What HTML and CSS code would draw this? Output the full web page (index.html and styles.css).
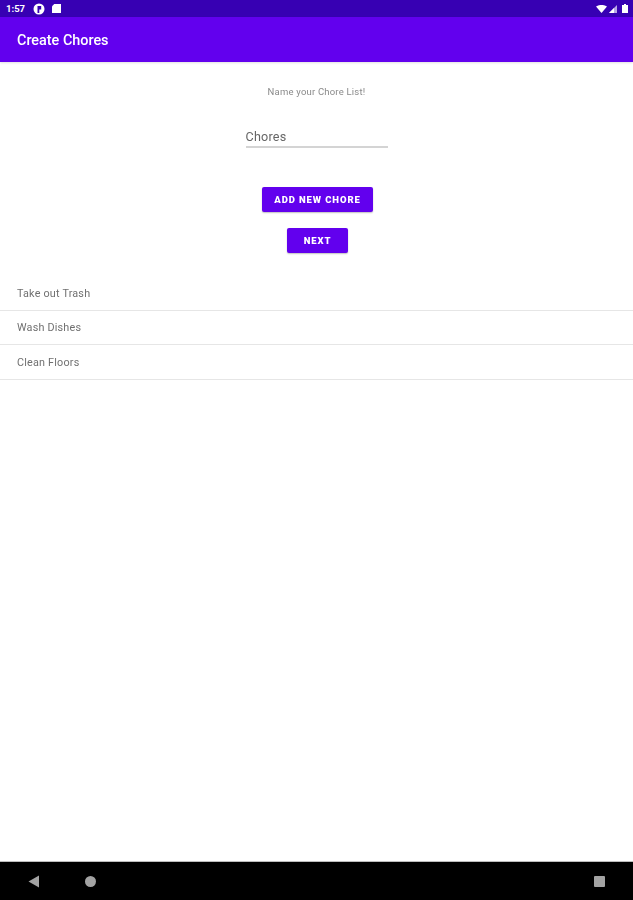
FILE: index.html
```html
<!DOCTYPE html>
<html lang="en">
<head>
<meta charset="utf-8">
<title>Create Chores</title>
<link rel="stylesheet" href="styles.css">
</head>
<body>
<div class="screen">
  <div class="status">
    <div class="status-left">
      <span class="time">1:57</span>
      <svg class="ic-f" width="12" height="12" viewBox="0 0 12 12"><circle cx="6" cy="6" r="5.500" fill="#fff"/><path d="M4.500 10V3h3.700v3.500H6.300V10z" fill="#3700b3"/></svg>
      <svg class="ic-s" width="9" height="9" viewBox="0 0 9 9"><path d="M2.200 0H9v9H0V2.200z" fill="#fff"/></svg>
    </div>
    <div class="status-right">
      <svg class="ic-wifi" width="11" height="8" viewBox="0 0 11 8"><path d="M0 1.600Q5.500-1.800 11 1.600L5.500 8z" fill="#fff"/></svg>
      <svg class="ic-signal" width="8" height="8" viewBox="0 0 8 8"><path d="M8 0V8H0z" fill="#b9a6e6"/><path d="M5 3V8H0z" fill="#fff"/></svg>
      <svg class="ic-batt" width="6" height="9" viewBox="0 0 6 9"><path d="M2 0h2v1h2v8H0V1h2z" fill="#fff"/></svg>
    </div>
  </div>
  <header class="appbar">Create Chores</header>
  <main class="content">
    <p class="prompt">Name your Chore List!</p>
    <div class="field">Chores</div>
    <button class="btn btn-add">ADD NEW CHORE</button>
    <button class="btn btn-next">NEXT</button>
    <ul class="list">
      <li>Take out Trash</li>
      <li>Wash Dishes</li>
      <li>Clean Floors</li>
    </ul>
  </main>
  <nav class="navbar">
    <svg class="nav-back" width="12" height="13" viewBox="0 0 12 13"><path d="M11 .5V12.500L.5 6.500z" fill="#a3a3a3"/></svg>
    <span class="nav-home"></span>
    <span class="nav-recent"></span>
  </nav>
</div>
</body>
</html>
```

FILE: styles.css
```css
* { box-sizing: border-box; }
html, body { margin: 0; padding: 0; }
body { font-family: Roboto, "Liberation Sans", sans-serif; background: #fff; }
.screen { width: 633px; height: 900px; display: flex; flex-direction: column; overflow: hidden; filter: blur(.35px); }
.status {
  height: 17px; background: #3700b3; color: #fff;
  display: flex; justify-content: space-between; align-items: center;
  padding: 0 5px 0 6px; flex: none;
}
.status-left, .status-right { display: flex; align-items: center; }
.time { font-size: 9.500px; font-weight: 700; width: 27px; }
.ic-f { margin-right: 7px; }
.ic-wifi { margin-right: 2px; }
.ic-signal { margin-right: 5px; }
.appbar {
  height: 45px; background: #6200ee; color: #fff; flex: none;
  font-size: 14.400px; font-weight: 500; padding: 1px 17px 0;
  display: flex; align-items: center;
  box-shadow: 0 1px 2px rgba(0,0,0,.12);
}
.content { flex: 1; display: flex; flex-direction: column; align-items: center; padding-top: 23px; }
.prompt { margin: 0; font-size: 9.500px; line-height: 13px; color: #8a8a8a; letter-spacing: .2px; }
.field {
  width: 142px; height: 24px; margin-top: 26px; padding: 4px 0 0 0;
  font-size: 12.600px; line-height: 18px; color: #666; letter-spacing: .2px;
  border-bottom: 2px solid #d4d4d4;
}
.btn {
  display: block; border: 0; border-radius: 2px; background: #6200ee; color: #fff;
  font-family: inherit; font-weight: 900; font-size: 9.500px; letter-spacing: .9px; padding: 0;
  height: 25px; margin-left: 2px; box-shadow: 0 1px 1.500px rgba(0,0,0,.25);
}
.btn-add { width: 111px; margin-top: 39px; }
.btn-next { width: 61px; margin-top: 16px; }
.list { list-style: none; margin: 23px 0 0; padding: 0; width: 100%; }
.list li {
  height: 34.500px; padding: 1px 17px 0; display: flex; align-items: center;
  font-size: 10.800px; color: #707070; letter-spacing: .2px;
  border-bottom: 1px solid #e6e6e6;
}
.navbar {
  height: 39px; background: #000; flex: none; position: relative;
  display: flex; align-items: center; padding: 0 28px;
  border-top: 1px solid #bdbdbd;
}
.nav-home { width: 11px; height: 11px; border-radius: 50%; background: #a3a3a3; margin-left: 45px; }
.nav-recent { width: 11px; height: 11px; border-radius: 1px; background: #a3a3a3; margin-left: auto; }
```
